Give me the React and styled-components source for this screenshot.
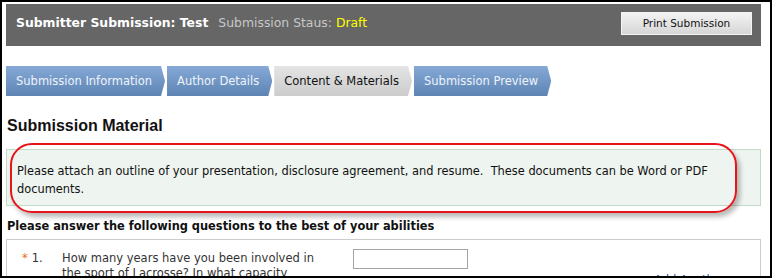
import React from 'react';
import styled, { createGlobalStyle } from 'styled-components';

const GlobalStyle = createGlobalStyle`
    html, body {
        margin: 0;
        padding: 0;
        background: #fff;
    }
    body {
        font-family: 'DejaVu Sans', Verdana, sans-serif;
    }
`;

const Frame = styled.div`
    position: relative;
    box-sizing: border-box;
    width: 772px;
    height: 278px;
    border: 2px solid #000;
    padding: 2px 9px 0 4px;
    overflow: hidden;
    background: #fff;
`;

const Header = styled.div`
    display: flex;
    align-items: center;
    justify-content: space-between;
    height: 42px;
    background: #666666;
    padding: 0 9px 0 10px;
`;

const Title = styled.div`
    display: flex;
    align-items: baseline;
    gap: 10px;
    margin-top: -6px;
`;

const Strong = styled.span`
    color: #fff;
    font-weight: 700;
    font-size: 12.4px;
`;

const Status = styled.span`
    color: #c8c8c8;
    font-size: 12.4px;
`;

const Draft = styled.span`
    color: #ffff00;
`;

const PrintButton = styled.button`
    box-sizing: border-box;
    width: 131px;
    height: 23px;
    margin-top: -4px;
    border: 1px solid #f4f4f4;
    background: linear-gradient(#f3f3f3, #d6d6d6);
    font-family: 'DejaVu Sans', Tahoma, sans-serif;
    font-size: 10.5px;
    color: #111;
    padding: 0;
`;

const Tabs = styled.nav`
    display: flex;
    gap: 2px;
    margin-top: 20px;
`;

const Tab = styled.div`
    height: 30px;
    display: flex;
    align-items: center;
    padding: 0 13px 0 10px;
    font-size: 11.5px;
    color: ${(p) => (p.active ? '#111' : '#eef3fa')};
    background: ${(p) =>
        p.active
            ? 'linear-gradient(#e4e4e4, #cccccc)'
            : 'linear-gradient(#86a9d7, #5d84b3)'};
    clip-path: polygon(0 0, calc(100% - 4px) 0, 100% 50%, calc(100% - 4px) 100%, 0 100%);
`;

const Heading = styled.h2`
    margin: 21px 0 0 1px;
    font-family: 'Liberation Sans', Arial, sans-serif;
    font-size: 16px;
    font-weight: 700;
    color: #111;
`;

const Notice = styled.div`
    margin-top: 14px;
    box-sizing: border-box;
    height: 57px;
    background: #eef4ef;
    border: 1px solid #c3dbc6;
    padding: 12px 10px 0;
    font-size: 11.4px;
    line-height: 18px;
    color: #111;
`;

const Callout = styled.div`
    position: absolute;
    left: 8px;
    top: 141px;
    width: 727px;
    height: 70px;
    box-sizing: border-box;
    border: 2px solid #e8141b;
    border-radius: 22px;
    box-shadow: 3px 4px 5px rgba(0, 0, 0, 0.28);
    pointer-events: none;
`;

const SubHeading = styled.div`
    margin: 13px 0 0 1px;
    font-size: 11.4px;
    font-weight: 700;
    color: #111;
`;

const QuestionBox = styled.div`
    margin-top: 6px;
    border: 1px solid #cccccc;
    height: 60px;
    padding: 9px 0 0 15px;
    display: grid;
    grid-template-columns: 40px 291px 1fr;
`;

const Number = styled.div`
    font-size: 11.5px;
    color: #333;
    padding-top: 2px;
`;

const Star = styled.span`
    color: #f06a1d;
    margin-right: 4px;
`;

const QuestionText = styled.div`
    width: 254px;
    font-size: 11.5px;
    line-height: 15px;
    color: #333;
    padding-top: 2px;
`;

const Answer = styled.div`
    display: flex;
    flex-direction: column;
    align-items: flex-start;
`;

const Input = styled.input`
    box-sizing: border-box;
    width: 115px;
    height: 20px;
    border: 1px solid #a5a5a5;
    margin: 0;
`;

const AddLink = styled.a`
    margin: 4px 0 0 301px;
    font-size: 11.5px;
    color: #1a56c4;
    text-decoration: none;
`;

export default function App() {
    return (
        <>
            <GlobalStyle />
            <Frame>
                <Header>
                    <Title>
                        <Strong>Submitter Submission: Test</Strong>
                        <Status>
                            Submission Staus: <Draft>Draft</Draft>
                        </Status>
                    </Title>
                    <PrintButton>Print Submission</PrintButton>
                </Header>
                <Tabs>
                    <Tab>Submission Information</Tab>
                    <Tab>Author Details</Tab>
                    <Tab active>Content &amp; Materials</Tab>
                    <Tab>Submission Preview</Tab>
                </Tabs>
                <Heading>Submission Material</Heading>
                <Notice>
                    Please attach an outline of your presentation, disclosure agreement, and
                    resume.&nbsp; These documents can be Word or PDF documents.
                </Notice>
                <SubHeading>Please answer the following questions to the best of your abilities</SubHeading>
                <QuestionBox>
                    <Number>
                        <Star>*</Star>1.
                    </Number>
                    <QuestionText>
                        How many years have you been involved in the sport of Lacrosse? In what
                        capacity have you been involved?
                    </QuestionText>
                    <Answer>
                        <Input />
                        <AddLink href="#">Add Another</AddLink>
                    </Answer>
                </QuestionBox>
                <Callout />
            </Frame>
        </>
    );
}
